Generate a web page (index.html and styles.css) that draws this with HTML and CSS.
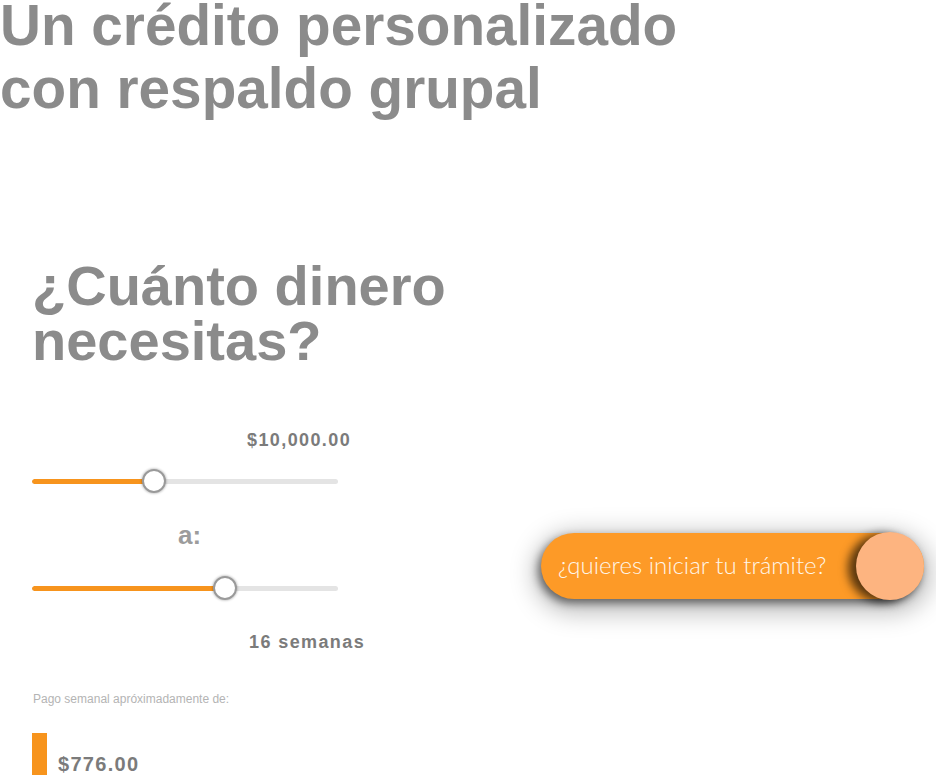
FILE: index.html
```html
<!DOCTYPE html>
<html lang="es">
<head>
<meta charset="utf-8">
<title>Crédito grupal</title>
<link rel="stylesheet" href="styles.css">
</head>
<body>
<h1 class="hero-title">Un crédito personalizado<br>con respaldo grupal</h1>
<section class="calc">
  <div class="calc-form">
    <h2 class="calc-title">¿Cuánto dinero<br>necesitas?</h2>
    <div class="value-label">$10,000.00</div>
    <div class="slider">
      <div class="track"><div class="fill" style="width:122px"></div></div>
      <div class="thumb" style="left:122px"></div>
    </div>
    <div class="term-sep">a:</div>
    <div class="slider slider-term">
      <div class="track"><div class="fill" style="width:193px"></div></div>
      <div class="thumb" style="left:193px"></div>
    </div>
    <div class="value-label term-label">16 semanas</div>
    <p class="pay-note">Pago semanal apróximadamente de:</p>
    <div class="pay-row">
      <span class="pay-bar"></span>
      <span class="pay-amount">$776.00</span>
    </div>
  </div>
  <div class="cta-col">
    <a class="cta" href="#">
      <span class="cta-text">¿quieres iniciar tu trámite?</span>
      <span class="cta-knob"></span>
    </a>
  </div>
</section>
</body>
</html>
```
FILE: styles.css
```css
html, body {
  margin: 0;
  padding: 0;
  background: #ffffff;
  overflow: hidden;
}
body {
  font-family: "Liberation Sans", Arial, Helvetica, sans-serif;
  color: #8a8a8a;
}
.hero-title {
  margin: -6px 0 0;
  font-size: 56.7px;
  line-height: 63px;
  font-weight: 700;
  color: #8b8b8b;
}
.calc {
  display: flex;
  margin-top: 138px;
  padding-left: 32px;
}
.calc-form {
  width: 476px;
  flex: none;
}
.calc-title {
  margin: 0;
  font-size: 56px;
  line-height: 55px;
  font-weight: 700;
  color: #8b8b8b;
}
.value-label {
  margin: 62px 0 0 215px;
  font-size: 18px;
  line-height: 20px;
  font-weight: 700;
  letter-spacing: 1.4px;
  color: #7b7b7b;
}
.term-label {
  margin-top: 32px;
  margin-left: 217px;
}
.slider {
  position: relative;
  width: 306px;
  height: 24px;
  margin-top: 19px;
  display: flex;
  align-items: center;
}
.slider-term {
  margin-top: 26px;
}
.track {
  width: 100%;
  height: 5px;
  border-radius: 3px;
  background: #e4e4e4;
  overflow: hidden;
}
.fill {
  height: 100%;
  background: #f7941d;
  border-radius: 3px 0 0 3px;
}
.thumb {
  position: absolute;
  top: 0;
  width: 24px;
  height: 24px;
  box-sizing: border-box;
  transform: translateX(-50%);
  border-radius: 50%;
  background: #ffffff;
  border: 2px solid #9a9a9a;
  box-shadow: 0 0 2px 1px rgba(0, 0, 0, 0.18);
}
.term-sep {
  margin: 27px 0 0 146px;
  font-size: 26px;
  line-height: 30px;
  font-weight: 700;
  color: #9c9c9c;
}
.pay-note {
  margin: 40px 0 0 1px;
  font-size: 12px;
  line-height: 14px;
  color: #b4b4b4;
}
.pay-row {
  display: flex;
  align-items: flex-end;
  gap: 11px;
  margin-top: 27px;
}
.pay-bar {
  width: 15px;
  height: 42px;
  background: #f7941d;
}
.pay-amount {
  font-size: 20px;
  line-height: 21px;
  font-weight: 700;
  letter-spacing: 1.3px;
  color: #7b7b7b;
}
.cta-col {
  flex: 1;
  padding-top: 275px;
}
.cta {
  display: flex;
  align-items: center;
  justify-content: space-between;
  width: 383px;
  height: 66px;
  margin-left: 33px;
  border-radius: 33px;
  background: #fd9a27;
  text-decoration: none;
  box-shadow: -3px 4px 8px rgba(0, 0, 0, 0.5), 0 7px 24px 7px rgba(0, 0, 0, 0.26);
}
.cta-text {
  padding-left: 17px;
  padding-bottom: 4px;
  font-family: "Lato", "Liberation Sans", sans-serif;
  font-weight: 300;
  font-size: 24px;
  color: #fff6ea;
}
.cta-knob {
  width: 68px;
  height: 68px;
  flex: none;
  border-radius: 50%;
  background: #fdb480;
  box-shadow: -8px 2px 10px rgba(0, 0, 0, 0.65);
}
```
